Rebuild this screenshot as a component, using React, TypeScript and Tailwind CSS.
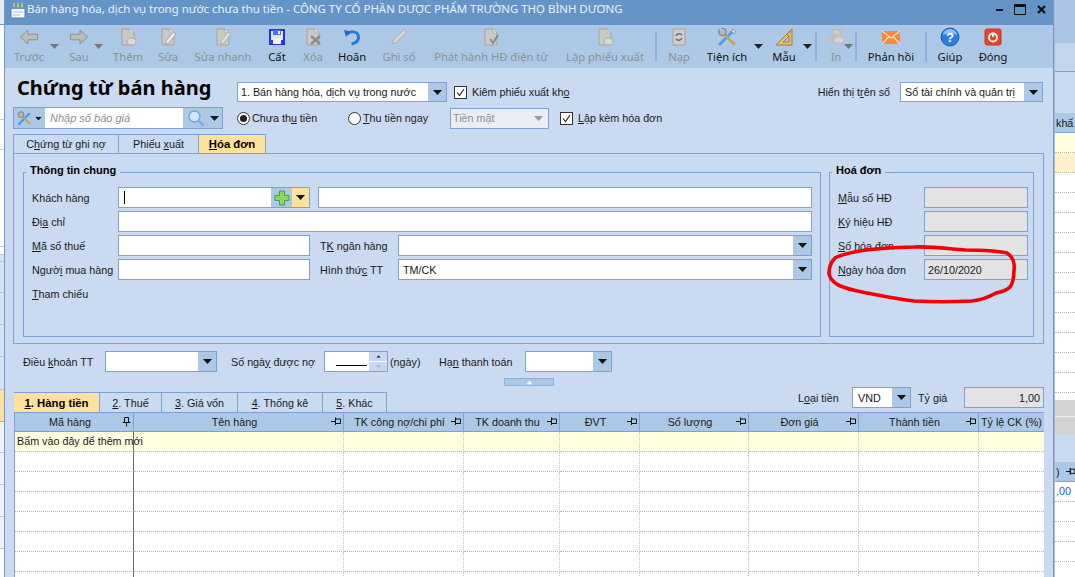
import React from "react";

const Caret = ({ className = "" }: { className?: string }) => (
  <svg width="9" height="5" viewBox="0 0 9 5" className={className}><path d="M0 0H9L4.5 5Z" fill="currentColor" /></svg>
);

const DocBase = ({ children }: { children?: React.ReactNode }) => (
  <svg width="20" height="20" viewBox="0 0 20 20">
    <path d="M4 2H12L16 6V18H4Z" fill="#c9c9c6" stroke="#a3a3a0" />
    <path d="M12 2V6H16Z" fill="#eeeeea" stroke="#a3a3a0" strokeWidth="0.6" />
    {children}
  </svg>
);

const icons: Record<string, React.ReactNode> = {
  back: <svg width="22" height="20" viewBox="0 0 20 20"><path d="M1.5 10L9 3V7.2H18.5V12.8H9V17Z" fill="#bdbdb8" stroke="#8f8f8a" /></svg>,
  next: <svg width="22" height="20" viewBox="0 0 20 20"><path d="M18.5 10L11 3V7.2H1.5V12.8H11V17Z" fill="#bdbdb8" stroke="#8f8f8a" /></svg>,
  add: <DocBase><ellipse cx="13.5" cy="14.5" rx="4.5" ry="3.5" fill="#dcdcd8" stroke="#adadaa" /></DocBase>,
  edit: <DocBase><path d="M8 14L15 5L18 7L11 16L7.5 17Z" fill="#e8e8e4" stroke="#9a9a96" strokeWidth="0.8" /></DocBase>,
  quick: <DocBase><path d="M8 14L15 5L18 7L11 16L7.5 17Z" fill="#dededa" stroke="#a3a3a0" strokeWidth="0.8" /></DocBase>,
  save: (
    <svg width="20" height="20" viewBox="0 0 20 20">
      <path d="M3 3H17V17H3Z" fill="#dfe8fb" stroke="#2433d6" strokeWidth="2" />
      <path d="M6 3H14V8H6Z" fill="#3f78e8" />
      <path d="M11 4H13V7H11Z" fill="#fff" />
      <path d="M3 13H17V17H3Z" fill="#2c3fdc" />
      <path d="M6 12H14V17H6Z" fill="#f3f6ff" />
    </svg>
  ),
  del: <DocBase><path d="M8 9L17 17M17 9L8 17" stroke="#8d8d8a" strokeWidth="2.4" /></DocBase>,
  undo: (
    <svg width="20" height="20" viewBox="0 0 20 20">
      <path d="M5 7C8 3.5 16 4 16.5 9.5C17 13.5 13.5 16 9.5 17" fill="none" stroke="#1f7bdc" strokeWidth="3" />
      <path d="M2 3L9 4.5L4 10Z" fill="#1f6bc8" />
    </svg>
  ),
  pencil: <svg width="20" height="20" viewBox="0 0 20 20"><path d="M3 17L4.5 12.5L14.5 2.5L17.5 5.5L7.5 15.5Z" fill="#d5d5d1" stroke="#a8a8a4" /></svg>,
  publish: <DocBase><path d="M9 12L12 16L17 8" fill="none" stroke="#8d8d88" strokeWidth="2" /></DocBase>,
  form: <DocBase><ellipse cx="13.5" cy="14.5" rx="4.5" ry="3.5" fill="#d8d8d4" stroke="#adadaa" /></DocBase>,
  reload: (
    <svg width="20" height="20" viewBox="0 0 20 20">
      <path d="M4 2H16V18H4Z" fill="#cfcfcc" stroke="#a3a3a0" />
      <path d="M7 9A3.5 3.5 0 0 1 13 8M13 11A3.5 3.5 0 0 1 7 12" fill="none" stroke="#6f6f6c" strokeWidth="1.6" />
    </svg>
  ),
  tools: (
    <svg width="22" height="22" viewBox="0 0 22 22">
      <path d="M4 18L17 5" stroke="#4aa0e4" strokeWidth="3" strokeLinecap="round" />
      <path d="M17 3L20 6L18 8L15 5Z" fill="#cfd9e5" stroke="#5a7ba0" strokeWidth="0.6" />
      <path d="M8 8L18 18" stroke="#c8a25a" strokeWidth="2.6" strokeLinecap="round" />
      <circle cx="6.5" cy="6" r="3.8" fill="#b5b5b2" stroke="#77777a" />
      <path d="M4 2L7 6" stroke="#adc8e6" strokeWidth="2" />
    </svg>
  ),
  ruler: (
    <svg width="20" height="20" viewBox="0 0 20 20">
      <path d="M18 2V18H2Z" fill="#e8bd6b" stroke="#a77a2e" />
      <path d="M15 9V15H9Z" fill="#adc8e6" stroke="#8b6624" strokeWidth="0.7" />
      <path d="M15 5H17M13 8H15" stroke="#8b6624" strokeWidth="0.8" />
    </svg>
  ),
  print: (
    <svg width="20" height="20" viewBox="0 0 20 20">
      <path d="M6 8V3.5L11 2L15 4V8Z" fill="#cdcdca" stroke="#b3b3b0" />
      <ellipse cx="10" cy="12" rx="8.5" ry="5" fill="#c0c0bd" />
      <ellipse cx="13" cy="13" rx="4.5" ry="2.5" fill="#d6d6d3" />
    </svg>
  ),
  mail: (
    <svg width="20" height="20" viewBox="0 0 20 20">
      <path d="M1 4H19V17H1Z" fill="#f58a3c" />
      <path d="M1 4L10 11L19 4M1 17L8 9.5M19 17L12 9.5" fill="none" stroke="#ffe3c4" strokeWidth="1.1" />
    </svg>
  ),
  help: (
    <svg width="20" height="20" viewBox="0 0 20 20">
      <circle cx="10" cy="10" r="9" fill="#2a7fdc" stroke="#1c5fb4" />
      <path d="M3 8A7 6 0 0 1 17 8C13 6 7 6 3 8Z" fill="#8ec0f0" />
      <text x="10" y="15" fontSize="13" fontWeight="700" textAnchor="middle" fill="#fff" fontFamily="Liberation Sans">?</text>
    </svg>
  ),
  close: (
    <svg width="20" height="20" viewBox="0 0 20 20">
      <rect x="2" y="2" width="16" height="16" rx="2" fill="#e2452a" stroke="#c9341c" />
      <circle cx="10" cy="10.5" r="4" fill="none" stroke="#fff" strokeWidth="1.8" />
      <path d="M10 5.5V10" stroke="#fff" strokeWidth="1.8" />
    </svg>
  ),
};

type TB = { label?: string; icon?: string; w: string; on?: boolean; arrow?: string; sep?: boolean; arrowOn?: boolean };
const toolbar: TB[] = [
  { label: "Trước", icon: "back", w: "w-[48px]", arrow: "left-[45px]" },
  { label: "Sau", icon: "next", w: "w-[52px]", arrow: "left-[41px]" },
  { label: "Thêm", icon: "add", w: "w-[46px]" },
  { label: "Sửa", icon: "edit", w: "w-[34px]" },
  { label: "Sửa nhanh", icon: "quick", w: "w-[76px]" },
  { label: "Cất", icon: "save", w: "w-[32px]", on: true },
  { label: "Xóa", icon: "del", w: "w-[40px]" },
  { label: "Hoãn", icon: "undo", w: "w-[38px]", on: true },
  { label: "Ghi sổ", icon: "pencil", w: "w-[56px]" },
  { label: "Phát hành HĐ điện tử", icon: "publish", w: "w-[128px]" },
  { label: "Lập phiếu xuất", icon: "form", w: "w-[100px]" },
  { sep: true, w: "" },
  { label: "Nạp", icon: "reload", w: "w-[44px]" },
  { label: "Tiện ích", icon: "tools", w: "w-[52px]", on: true, arrow: "left-[53px]", arrowOn: true },
  { label: "Mẫu", icon: "ruler", w: "w-[62px]", on: true, arrow: "left-[50px]", arrowOn: true },
  { sep: true, w: "" },
  { label: "In", icon: "print", w: "w-[38px]", arrow: "left-[27px]" },
  { sep: true, w: "" },
  { label: "Phản hồi", icon: "mail", w: "w-[68px]", on: true },
  { sep: true, w: "" },
  { label: "Giúp", icon: "help", w: "w-[46px]", on: true },
  { label: "Đóng", icon: "close", w: "w-[40px]", on: true },
];

const ToolItem = ({ t }: { t: TB }) => {
  if (t.sep) return <div className="w-[2px] h-[30px] mt-[7px] bg-[#8eb0da]" />;
  return (
    <div className={`relative flex flex-col items-center pt-[1px] shrink-0 ${t.w}`}>
      <div className="h-[22px] flex items-center justify-center">{icons[t.icon!]}</div>
      <div className={`h-[16px] leading-[16px] mt-[1px] whitespace-nowrap text-[11.2px] [font-family:'Noto_Sans',sans-serif] ${t.on ? "text-[#111]" : "text-[#8b9096]"}`}>{t.label}</div>
      {t.arrow && (
        <span className={`absolute top-[19px] leading-none flex ${t.arrow} ${t.arrowOn ? "text-[#222]" : "text-[#75777a]"}`}>
          <Caret />
        </span>
      )}
    </div>
  );
};

const Box = ({ className = "", children }: { className?: string; children?: React.ReactNode }) => (
  <div className={`h-[21px] border border-[#7da2d2] bg-white flex items-center shrink-0 whitespace-nowrap ${className}`}>{children}</div>
);

const Drop = ({ w = "w-[18px]" }: { w?: string }) => (
  <div className={`ml-auto h-full bg-[#adc8e6] flex items-center justify-center text-[#111] shrink-0 ${w}`}><Caret /></div>
);

const Check = () => (
  <div className="w-[13px] h-[13px] border border-[#333] bg-white flex items-center justify-center shrink-0">
    <svg width="11" height="11" viewBox="0 0 11 11"><path d="M2 5.5L4.5 8.5L9 2" fill="none" stroke="#222" strokeWidth="1.1" /></svg>
  </div>
);

const Radio = ({ on }: { on?: boolean }) => (
  <div className="w-[13px] h-[13px] rounded-full border border-[#333] bg-white flex items-center justify-center shrink-0">
    {on && <div className="w-[7px] h-[7px] rounded-full bg-[#222]" />}
  </div>
);

const FormRow = ({ children, className = "mt-[3px]" }: { children: React.ReactNode; className?: string }) => (
  <div className={`flex items-center h-[21px] pl-[8px] ${className}`}>{children}</div>
);

const Lbl = ({ w, children }: { w: string; children: React.ReactNode }) => (
  <div className={`${w} shrink-0 whitespace-nowrap text-[#1a1a1a]`}>{children}</div>
);

const Pin = ({ v }: { v?: boolean }) =>
  v ? (
    <svg width="9" height="10" viewBox="0 0 9 10"><path d="M2.5 0.5H6.5V5.5H2.5ZM0.5 5.5H8.5M4.5 5.5V9.5" fill="none" stroke="#111" /></svg>
  ) : (
    <svg width="10" height="9" viewBox="0 0 10 9"><path d="M4.5 2H9.5V6.5H4.5ZM4.5 0.5V8M0 4.5H4.5" fill="none" stroke="#111" /></svg>
  );

const cols = [
  { t: "Mã hàng", pin: "v" },
  { t: "Tên hàng", pin: "h" },
  { t: "TK công nợ/chi phí", pin: "h" },
  { t: "TK doanh thu", pin: "h" },
  { t: "ĐVT", pin: "h" },
  { t: "Số lượng", pin: "h" },
  { t: "Đơn giá", pin: "h" },
  { t: "Thành tiền", pin: "h" },
  { t: "Tỷ lệ CK (%)", pin: "" },
];
const gridCols = "grid grid-cols-[119px_210px_120px_96px_80px_109px_110px_120px_65px]";

export default function App() {
  const rowIdx = [1, 2, 3, 4, 5, 6, 7];
  return (
    <div className="w-[1075px] h-[577px] overflow-hidden flex text-[10.75px] leading-[16px] [font-family:'Liberation_Sans',sans-serif] text-[#1a1a1a]">
      {/* background window, left sliver */}
      <div className="w-[4px] h-full shrink-0 flex flex-col bg-white">
        <div className="h-[25px] bg-[#e7edf5] border-b border-[#7d8da3]" />
        <div className="h-[95px] border-b border-[#b9cde6]" />
        <div className="h-[30px] border-b border-[#b9cde6]" />
        <div className="h-[97px] border-b border-[#b9cde6]" />
        <div className="h-[8px] border-b border-[#b9cde6]" />
        <div className="h-[7px] bg-[#d5e2f3] border-b border-[#a9c4e4]" />
        <div className="h-[31px] bg-[#d5e2f3] border-b border-[#a9c4e4]" />
        <div className="h-[32px] bg-[#d5e2f3] border-b border-[#a9c4e4]" />
        <div className="h-[32px] bg-[#d5e2f3] border-b border-[#a9c4e4]" />
        <div className="h-[33px] bg-[#d5e2f3] border-b border-[#a9c4e4]" />
        <div className="h-[32px] bg-[#fddf9e] border-b border-[#ef9a55]" />
        <div className="h-[31px] bg-[#eef3fa] border-b border-[#a9c4e4]" />
        <div className="h-[32px] bg-[#eef3fa] border-b border-[#a9c4e4]" />
        <div className="h-[32px] bg-[#eef3fa] border-b border-[#a9c4e4]" />
        <div className="h-[32px] bg-[#eef3fa] border-b border-[#a9c4e4]" />
      </div>

      {/* main window */}
      <div className="w-[1050px] h-full shrink-0 flex flex-col border-x border-[#7298cc] bg-[#c9daf1]">
        <div className="h-[25px] shrink-0 bg-[#6595c6] flex items-center pl-[5px]">
          <svg width="16" height="17" viewBox="0 0 16 17" className="-mt-[4px]">
            <rect x="1" y="3" width="14" height="13" rx="1" fill="#f4f7fc" stroke="#4a7fc0" />
            <rect x="1" y="3" width="14" height="4" fill="#5c9ae0" />
            <path d="M4 1V5M8 1V5M12 1V5" stroke="#f0c24a" strokeWidth="1.6" />
            <path d="M3 10H13M3 13H10" stroke="#9fc3ea" />
          </svg>
          <div className="ml-[1px] -mt-[7px] text-[#eaf1f8] whitespace-nowrap text-[11.43px] [font-family:'Noto_Sans',sans-serif]">Bán hàng hóa, dịch vụ trong nước chưa thu tiền - CÔNG TY CỔ PHẦN DƯỢC PHẨM TRƯỜNG THỌ BÌNH DƯƠNG</div>
          <div className="ml-auto flex items-center text-[#111] -mt-[6px]">
            <div className="w-[7px] h-[2px] bg-[#111]" />
            <div className="ml-[11px] w-[12px] h-[11px] border border-[#111] border-t-[3px]" />
            <svg width="9" height="9" viewBox="0 0 9 9" className="ml-[11px] mr-[7px]"><path d="M1 1L8 8M8 1L1 8" stroke="#111" strokeWidth="2.2" /></svg>
          </div>
        </div>

        <div className="h-[43px] shrink-0 bg-[#adc8e6] flex">
          {toolbar.map((t, i) => <ToolItem key={i} t={t} />)}
        </div>

        {/* heading */}
        <div className="flex items-center h-[20px] mt-[14px] shrink-0 pl-[12px] pr-[10px]">
          <div className="w-[220px] shrink-0 text-[20px] font-bold text-black whitespace-nowrap leading-[20px] -mt-[9px] [font-family:'Noto_Sans',sans-serif]">Chứng từ bán hàng</div>
          <Box className="w-[210px] !h-[20px] pl-[3px]">1. Bán hàng hóa, dịch vụ trong nước<Drop w="w-[18px]" /></Box>
          <div className="ml-[7px]"><Check /></div>
          <div className="ml-[5px] whitespace-nowrap">Kiêm phiếu xuất kh<u>o</u></div>
          <div className="ml-auto whitespace-nowrap">Hiển thị t<u>r</u>ên sổ</div>
          <Box className="ml-[10px] w-[143px] !h-[20px] pl-[4px]">Sổ tài chính và quản trị<Drop /></Box>
        </div>

        <div className="flex items-center h-[22px] mt-[5px] shrink-0 pl-[8px]">
          <div className="w-[210px] h-[22px] border border-[#7da2d2] flex shrink-0">
            <div className="w-[31px] bg-[#adc8e6] flex items-center justify-center gap-[1px]">
              <svg width="17" height="17" viewBox="0 0 22 22">
                <path d="M4 18L17 5" stroke="#4aa0e4" strokeWidth="3" strokeLinecap="round" />
                <path d="M8 8L18 18" stroke="#c8a25a" strokeWidth="2.6" strokeLinecap="round" />
                <circle cx="6.5" cy="6" r="3.8" fill="#b5b5b2" stroke="#77777a" />
              </svg>
              <Caret className="scale-75" />
            </div>
            <div className="flex-1 bg-white pl-[5px] italic text-[#8a8f96] leading-[20px] text-[11px]">Nhập số báo giá</div>
            <div className="w-[39px] bg-[#adc8e6] flex items-center justify-center gap-[5px]">
              <svg width="18" height="18" viewBox="0 0 18 18">
                <circle cx="7.5" cy="7.5" r="5.5" fill="#cfe6fb" stroke="#6aa8e0" strokeWidth="1.4" />
                <path d="M12 12L16 16" stroke="#7fb0de" strokeWidth="2.6" strokeLinecap="round" />
              </svg>
              <Caret />
            </div>
          </div>
          <div className="ml-[14px]"><Radio on /></div>
          <div className="ml-[2px] w-[96px] whitespace-nowrap">Chưa th<u>u</u> tiền</div>
          <Radio />
          <div className="ml-[2px] w-[87px] whitespace-nowrap"><u>T</u>hu tiền ngay</div>
          <Box className="w-[99px] !bg-[#e9eef5] pl-[2px] text-[#8c8f93]">
            Tiền mặt
            <span className="ml-auto mr-[5px] flex text-[#9a9a9a]"><Caret /></span>
          </Box>
          <div className="ml-[11px]"><Check /></div>
          <div className="ml-[5px] whitespace-nowrap"><u>L</u>ập kèm hóa đơn</div>
        </div>

        {/* top tabs */}
        <div className="flex h-[20px] mt-[5px] ml-[8px] shrink-0 relative z-10 -mb-px">
          <div className="w-[106px] border border-[#7da2d2] flex items-center justify-center whitespace-nowrap"><span>C<u>h</u>ứng từ ghi nợ</span></div>
          <div className="w-[80px] border border-l-0 border-[#7da2d2] flex items-center justify-center whitespace-nowrap"><span>Phiếu <u>x</u>uất</span></div>
          <div className="w-[67px] border border-l-0 border-[#7da2d2] bg-[#fee19b] font-bold text-[11.3px] text-black flex items-center justify-center whitespace-nowrap"><span><u>H</u>óa đơn</span></div>
        </div>

        {/* panel */}
        <div className="ml-[8px] w-[1031px] h-[191px] shrink-0 border border-[#7da2d2] flex pl-[9px] pt-[18px]">
          <div className="relative w-[798px] h-[165px] shrink-0 border border-[#7da2d2] pt-[14px]">
            <div className="absolute -top-[11px] left-[2px] px-[4px] bg-[#c9daf1] font-bold text-[11px] text-black whitespace-nowrap">Thông tin chung</div>
            <FormRow className="">
              <Lbl w="w-[86px]">Khách hàn<u>g</u></Lbl>
              <Box className="w-[192px]">
                <div className="ml-[5px] w-px h-[13px] bg-black" />
                <div className="ml-auto w-[21px] h-full bg-[#adc8e6] flex items-center justify-center">
                  <svg width="16" height="16" viewBox="0 0 16 16"><path d="M5.5 1H10.5V5.5H15V10.5H10.5V15H5.5V10.5H1V5.5H5.5Z" fill="#8bd868" stroke="#4f9a3c" /></svg>
                </div>
                <div className="w-[17px] h-full bg-[#fee19b] flex items-center justify-center text-[#111]"><Caret /></div>
              </Box>
              <Box className="ml-[8px] w-[494px]" />
            </FormRow>
            <FormRow><Lbl w="w-[86px]">Đị<u>a</u> chỉ</Lbl><Box className="w-[694px]" /></FormRow>
            <FormRow>
              <Lbl w="w-[86px]"><u>M</u>ã số thuế</Lbl><Box className="w-[192px]" />
              <div className="ml-[10px]" />
              <Lbl w="w-[78px]">T<u>K</u> ngân hàng</Lbl><Box className="w-[414px]"><Drop /></Box>
            </FormRow>
            <FormRow>
              <Lbl w="w-[86px]">Ngườ<u>i</u> mua hàng</Lbl><Box className="w-[192px]" />
              <div className="ml-[10px]" />
              <Lbl w="w-[78px]">Hình thứ<u>c</u> TT</Lbl><Box className="w-[414px] pl-[4px]">TM/CK<Drop /></Box>
            </FormRow>
            <div className="h-[20px] mt-[4px] pl-[8px] flex items-center"><span><u>T</u>ham chiếu</span></div>
          </div>
          <div className="relative ml-[8px] w-[205px] h-[165px] shrink-0 border border-[#7da2d2] pt-[14px]">
            <div className="absolute -top-[11px] left-[2px] px-[4px] bg-[#c9daf1] font-bold text-[11px] text-black whitespace-nowrap">Hoá đơn</div>
            <FormRow className=""><Lbl w="w-[86px]"><u>M</u>ẫu số HĐ</Lbl><Box className="w-[104px] !bg-[#e3e3e3]" /></FormRow>
            <FormRow><Lbl w="w-[86px]"><u>K</u>ý hiệu HĐ</Lbl><Box className="w-[104px] !bg-[#e3e3e3]" /></FormRow>
            <FormRow><Lbl w="w-[86px]"><u>S</u>ố hóa đơn</Lbl><Box className="w-[104px] !bg-[#e3e3e3]" /></FormRow>
            <FormRow><Lbl w="w-[86px]"><u>N</u>gày hóa đơn</Lbl><Box className="w-[104px] !bg-[#e3e3e3] pl-[3px]">26/10/2020</Box></FormRow>
          </div>
        </div>

        {/* terms */}
        <div className="flex items-center h-[21px] mt-[7px] pl-[18px] shrink-0">
          <Lbl w="w-[82px]">Điều <u>k</u>hoản TT</Lbl>
          <Box className="w-[112px]"><Drop /></Box>
          <div className="ml-[14px]" />
          <Lbl w="w-[93px]">Số ngà<u>y</u> được nợ</Lbl>
          <Box className="w-[64px]">
            <div className="flex-1 h-full flex items-end justify-end pr-[2px] pb-[5px]"><div className="w-[31px] h-px bg-black" /></div>
            <div className="w-[18px] h-full flex flex-col gap-px">
              <div className="flex-1 bg-[#c5d8f0] flex items-center justify-center"><Caret className="scale-50 rotate-180 text-[#222]" /></div>
              <div className="flex-1 bg-[#c5d8f0] flex items-center justify-center"><Caret className="scale-50 text-[#aaa]" /></div>
            </div>
          </Box>
          <div className="ml-[2px]" />
          <Lbl w="w-[49px]">(ngày)</Lbl>
          <Lbl w="w-[86px]">Hạ<u>n</u> thanh toán</Lbl>
          <Box className="w-[87px]"><Drop /></Box>
        </div>

        <div className="ml-[499px] mt-[6px] w-[50px] h-[8px] shrink-0 bg-[#adc8e6] border border-[#8eb0da] flex items-center justify-center text-white">
          <Caret className="rotate-180 scale-75" />
        </div>

        {/* detail tabs & currency */}
        <div className="flex h-[26px] shrink-0 pl-[9px] pr-[9px]">
          <div className="flex self-end h-[20px]">
            <div className="w-[85px] bg-[#fee19b] font-bold text-[11.3px] text-black flex items-center justify-center whitespace-nowrap border-t border-[#7da2d2]"><span><u>1</u>. Hàng tiền</span></div>
            <div className="w-[63px] border-t border-r border-l border-[#7da2d2] flex items-center justify-center whitespace-nowrap"><span><u>2</u>. Thuế</span></div>
            <div className="w-[76px] border-t border-r border-[#7da2d2] flex items-center justify-center whitespace-nowrap"><span><u>3</u>. Giá vốn</span></div>
            <div className="w-[85px] border-t border-r border-[#7da2d2] flex items-center justify-center whitespace-nowrap"><span><u>4</u>. Thống kê</span></div>
            <div className="w-[64px] border-t border-r border-[#7da2d2] flex items-center justify-center whitespace-nowrap"><span><u>5</u>. Khác</span></div>
          </div>
          <div className="ml-auto flex items-center h-[21px] mt-[1px]">
            <Lbl w="w-[54px]">L<u>o</u>ại tiền</Lbl>
            <Box className="w-[59px] pl-[5px]">VND<Drop /></Box>
            <div className="ml-[7px]" />
            <Lbl w="w-[46px]">Tỷ <u>g</u>iá</Lbl>
            <Box className="w-[80px] !bg-[#e3e3e3] justify-end pr-[3px]">1,00</Box>
          </div>
        </div>

        {/* grid */}
        <div className="ml-[9px] w-[1030px] flex-1 min-h-0 overflow-hidden border-l border-[#7da2d2] bg-white">
          <div className={`${gridCols} h-[20px] bg-[#adc8e6] border-b border-[#7da2d2] border-t`}>
            {cols.map((c, i) => (
              <div key={i} className="relative flex items-center justify-center whitespace-nowrap overflow-hidden border-r border-[#7da2d2] last:border-r-0">
                <span className={c.pin ? "pr-[8px]" : ""}>{c.t}</span>
                {c.pin && <span className="absolute right-[2px] top-[4px] flex"><Pin v={c.pin === "v"} /></span>}
              </div>
            ))}
          </div>
          <div className={`${gridCols} h-[20px] bg-[#ffffdf]`}>
            {cols.map((_, i) => (
              <div key={i} className={`border-b border-dotted border-b-[#bbb] ${i === 0 ? "border-r [border-right-style:solid] border-r-[#666] whitespace-nowrap pl-[2px] leading-[19px] relative z-10" : i < 8 ? "border-r border-r-[#c4c4c4]" : ""}`}>
                {i === 0 ? "Bấm vào đây để thêm mới" : ""}
              </div>
            ))}
          </div>
          {rowIdx.map((r) => (
            <div key={r} className={`${gridCols} h-[20px]`}>
              {cols.map((_, i) => (
                <div key={i} className={`border-b border-dotted border-b-[#bbb] ${i === 0 ? "border-r [border-right-style:solid] border-r-[#666]" : i < 8 ? "border-r border-r-[#c4c4c4]" : ""}`} />
              ))}
            </div>
          ))}
        </div>
      </div>

      {/* background window, right part */}
      <div className="flex-1 min-w-0 h-full flex flex-col overflow-hidden bg-white border-l border-[#b0b8c4]">
        <div className="h-[43px] bg-[#a9c4e4]" />
        <div className="h-[29px] bg-[#c4d6ee] border-b border-[#7da2d2]" />
        <div className="h-[41px] bg-[#c9daf1]" />
        <div className="h-[20px] bg-[#adc8e6] leading-[20px] border-b border-[#7da2d2] pl-[1px] whitespace-nowrap">khấ</div>
        <div className="h-[20px] bg-[#ffffdf] border-b border-dotted border-[#bbb]" />
        <div className="h-[20px] bg-[#fff0cc] border-b border-dotted border-[#bbb]" />
        {[1, 2, 3, 4, 5, 6, 7, 8, 9, 10, 11].map((n) => (
          <div key={n} className="h-[20px] border-b border-dotted border-[#bbb]" />
        ))}
        <div className="h-[7px] bg-white" />
        <div className="h-[17px] bg-[#d3d3d3] border-b border-[#eee]" />
        <div className="h-[18px] bg-[#d3d3d3]" />
        <div className="h-[27px] bg-[#c9daf1]" />
        <div className="h-[20px] bg-[#adc8e6] flex items-center pl-[1px] gap-[6px] border-b border-[#7da2d2]">)<Pin /></div>
        <div className="h-[20px] border-b border-dotted border-[#bbb] text-[#0b6ad8] leading-[18px] pl-[1px]">,00</div>
        <div className="h-[20px] border-b border-dotted border-[#bbb]" />
        <div className="h-[20px] border-b border-dotted border-[#bbb]" />
        <div className="h-[20px] border-b border-dotted border-[#bbb]" />
      </div>

      {/* freehand annotation drawn over the form */}
      <svg className="absolute left-0 top-0 pointer-events-none z-20" width="1075" height="577">
        <path
          d="M914 247 C930 246 950 249 965 250 C985 250 998 251 1007 253 C1013 257 1015 264 1014 270 C1014 278 1013 283 1010 287 C1006 291 1002 292 996 293 C989 297 982 300 972 301 C952 302 932 302 914 301 C896 299 878 295 862 292 C852 290 845 288 838 285 C832 281 829 277 829 273 C829 267 831 262 835 258 C842 254 853 252 866 250 C882 248 898 247 914 247 Z"
          fill="none"
          stroke="#f40000"
          strokeWidth="3.6"
        />
      </svg>
    </div>
  );
}
